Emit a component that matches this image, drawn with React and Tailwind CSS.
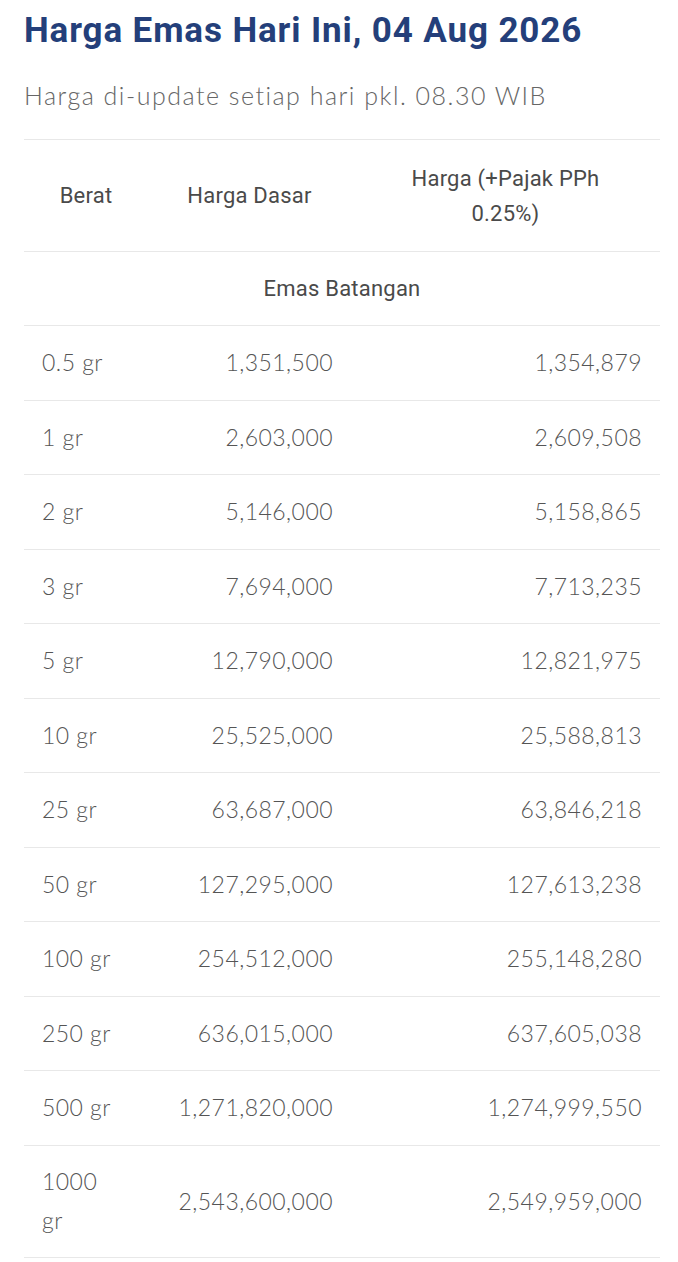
import React from 'react';

const rows = [
  ['0.5 gr', '1,351,500', '1,354,879'],
  ['1 gr', '2,603,000', '2,609,508'],
  ['2 gr', '5,146,000', '5,158,865'],
  ['3 gr', '7,694,000', '7,713,235'],
  ['5 gr', '12,790,000', '12,821,975'],
  ['10 gr', '25,525,000', '25,588,813'],
  ['25 gr', '63,687,000', '63,846,218'],
  ['50 gr', '127,295,000', '127,613,238'],
  ['100 gr', '254,512,000', '255,148,280'],
  ['250 gr', '636,015,000', '637,605,038'],
  ['500 gr', '1,271,820,000', '1,274,999,550'],
  ['1000 gr', '2,543,600,000', '2,549,959,000'],
];

export default function App() {
  return (
    <div className="bg-white pl-6 pr-[18px] pt-[8px] pb-6 font-['Lato',sans-serif] text-[#555]">
      <h1 className="font-['Roboto',sans-serif] text-[35px] font-bold leading-[46px] tracking-[0.025em] text-[#243f7a]">
        Harga Emas Hari Ini, 04 Aug 2026
      </h1>
      <p className="mt-[24px] text-[25px] font-light leading-[34px] tracking-[0.06em] text-[#666]">
        Harga di-update setiap hari pkl. 08.30 WIB
      </p>

      <table className="mt-[27px] w-full table-fixed border-collapse text-[23px] tracking-[0.02em]">
        <colgroup>
          <col className="w-[124px]" />
          <col className="w-[203px]" />
          <col />
        </colgroup>
        <thead>
          <tr className="h-[112px] border-y border-[#e8e8e8] font-['Roboto',sans-serif] text-[22px] tracking-[0.01em]">
            <th className="px-[18px] text-center font-normal leading-[35px] text-[#4a4a4a]">Berat</th>
            <th className="px-[18px] text-center font-normal leading-[35px] text-[#4a4a4a]">Harga Dasar</th>
            <th className="px-[18px] text-center font-normal leading-[35px] text-[#4a4a4a]">
              Harga (+Pajak PPh
              <br />
              0.25%)
            </th>
          </tr>
        </thead>
        <tbody>
          <tr className="h-[74px] border-b border-[#e8e8e8]">
            <td colSpan={3} className="text-center font-['Roboto',sans-serif] text-[22px] tracking-[0.01em] text-[#4a4a4a]">
              Emas Batangan
            </td>
          </tr>
          {rows.map(([berat, dasar, pajak]) => (
            <tr
              key={berat}
              className={`border-b border-[#e8e8e8] ${berat === '1000 gr' ? 'h-[112px]' : 'h-[74.5px]'}`}
            >
              <td className="pl-[18px] pr-[28px] leading-[39px] font-light">{berat}</td>
              <td className="px-[18px] text-right leading-[39px] font-light">{dasar}</td>
              <td className="px-[18px] text-right leading-[39px] font-light">{pajak}</td>
            </tr>
          ))}
        </tbody>
      </table>
    </div>
  );
}
